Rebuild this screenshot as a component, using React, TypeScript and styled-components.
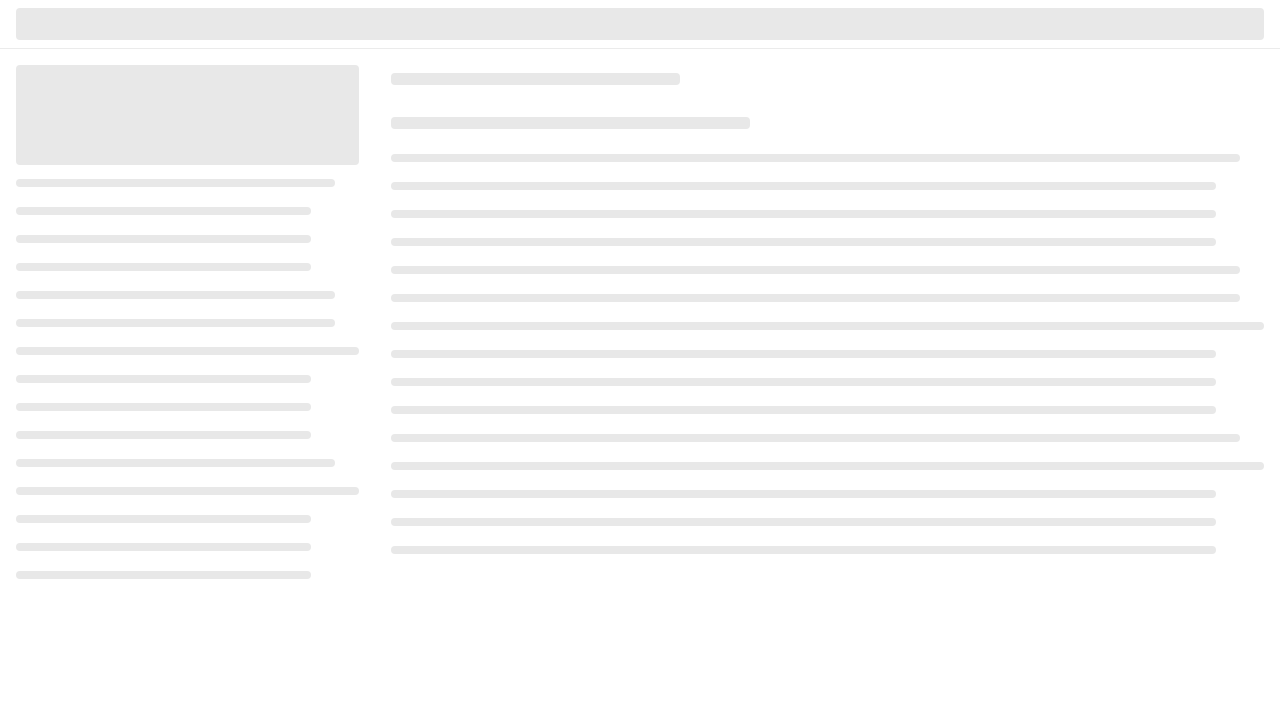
import React from "react";
import styled, { createGlobalStyle } from "styled-components";

const GlobalStyle = createGlobalStyle`
  html, body {
    margin: 0;
    padding: 0;
    background: #ffffff;
    font-family: "Liberation Sans", Arial, sans-serif;
  }
`;

const bone = "#e8e8e8";

// offsets from full width, shared by both columns
const lineCuts = [24, 48, 48, 48, 24, 24, 0, 48, 48, 48, 24, 0, 48, 48, 48];

const Header = styled.header`
  padding: 8px 16px;
  border-bottom: 1px solid #ebebeb;
`;

const SearchBone = styled.div`
  height: 32px;
  border-radius: 4px;
  background: ${bone};
`;

const Main = styled.main`
  display: grid;
  grid-template-columns: 343px 1fr;
  column-gap: 32px;
  padding: 16px;
`;

const Sidebar = styled.aside`
  display: flex;
  flex-direction: column;
`;

const Content = styled.section`
  display: flex;
  flex-direction: column;
  padding-top: 8px;
`;

const Cover = styled.div`
  height: 100px;
  border-radius: 4px;
  background: ${bone};
  margin-bottom: 14px;
`;

const LineList = styled.div`
  display: flex;
  flex-direction: column;
  gap: 20px;
`;

const Line = styled.div<{ $cut: number }>`
  height: 8px;
  border-radius: 4px;
  background: ${bone};
  width: calc(100% - ${(p) => p.$cut}px);
`;

const Title = styled.div<{ $w: number; $gap: number }>`
  height: 12px;
  border-radius: 4px;
  background: ${bone};
  width: ${(p) => p.$w}px;
  margin-bottom: ${(p) => p.$gap}px;
`;

const Lines = () => (
  <LineList>
    {lineCuts.map((cut, i) => (
      <Line key={i} $cut={cut} />
    ))}
  </LineList>
);

export default function App() {
  return (
    <>
      <GlobalStyle />
      <Header>
        <SearchBone />
      </Header>
      <Main>
        <Sidebar>
          <Cover />
          <Lines />
        </Sidebar>
        <Content>
          <Title $w={289} $gap={32} />
          <Title $w={359} $gap={25} />
          <Lines />
        </Content>
      </Main>
    </>
  );
}
